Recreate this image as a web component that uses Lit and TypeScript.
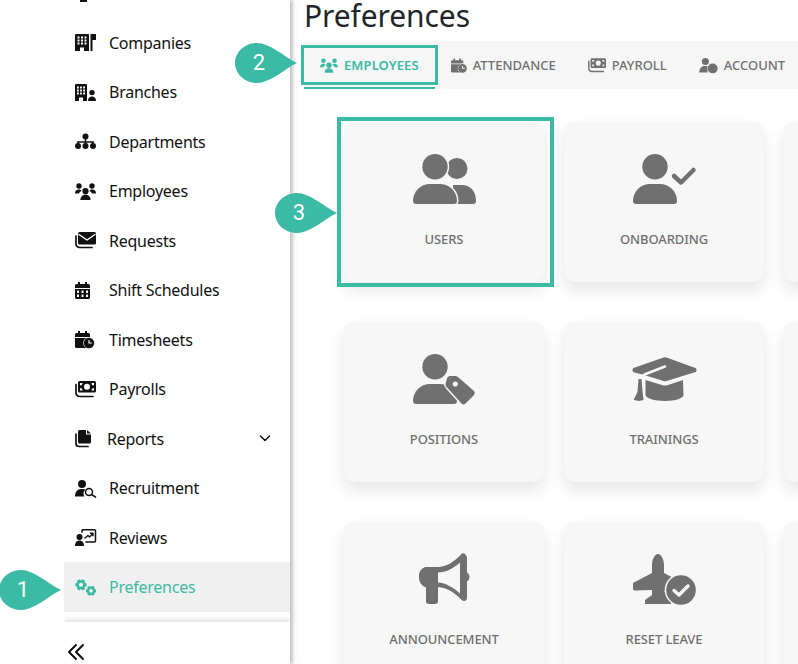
import { LitElement, html, css, svg } from 'lit';
import { customElement } from 'lit/decorators.js';

// polygon gear with a round hole, used with fill-rule evenodd
function gear(cx: number, cy: number, r: number, teeth = 6): string {
  const inner = r * 0.74;
  const pts: string[] = [];
  for (let i = 0; i < teeth; i++) {
    const a = (i / teeth) * Math.PI * 2;
    const w = Math.PI / teeth;
    [[inner, -w * 0.95], [r, -w * 0.5], [r, w * 0.5], [inner, w * 0.95]].forEach(([rad, off]) => {
      pts.push(`${(cx + rad * Math.cos(a + off)).toFixed(2)} ${(cy + rad * Math.sin(a + off)).toFixed(2)}`);
    });
  }
  const h = r * 0.36;
  return `M${pts.join('L')}zM${cx - h} ${cy}a${h} ${h} 0 1 0 ${h * 2} 0a${h} ${h} 0 1 0 ${-h * 2} 0z`;
}

function holes(xs: number[], ys: number[], w: number, h: number): string {
  return xs.map(x => ys.map(y => `M${x} ${y}h${w}v${h}h${-w}z`).join('')).join('');
}

const ICONS = {
  stub: svg`<path d="M5 14h7v3H5z"/>`,
  companies: svg`<path fill-rule="evenodd" d="M1 0h12a1 1 0 0 1 1 1v16H9v-3.5H5V17H0V1a1 1 0 0 1 1-1z${holes([2.5, 6, 9.5], [2.5, 5.5, 8.5], 2, 2)}"/><path d="M15.5 0H21v6h-3.5v11h-2z"/>`,
  branches: svg`<path fill-rule="evenodd" d="M1 0h10a1 1 0 0 1 1 1v16H8v-3.5H4V17H0V1a1 1 0 0 1 1-1z${holes([2, 5.1, 8.2], [2.5, 5.5, 8.5], 1.8, 2)}"/><circle cx="17" cy="8.6" r="2.7"/><path d="M13 17c0-3 1.5-4.6 4-4.6s4 1.6 4 4.6z"/>`,
  departments: svg`<circle cx="10.5" cy="3.5" r="3"/><path d="M9.7 5h1.6v3.2H18.8V12h-1.6V9.8h-5.9V12H9.7V9.8H3.8V12H2.2V8.2h7.5z"/><circle cx="3" cy="13" r="3"/><circle cx="10.5" cy="13" r="3"/><circle cx="18" cy="13" r="3"/>`,
  employees: svg`<circle cx="10.5" cy="8.2" r="3.1"/><path d="M5.4 17c0-3.2 2-5.3 5.1-5.3s5.1 2.1 5.1 5.3z"/><circle cx="4" cy="3" r="2.7"/><circle cx="17" cy="3" r="2.7"/><path d="M0 10.5c0-2.4 1.5-3.9 3.8-3.9 1.2 0 2.2.4 2.8 1.1-1.4 1-2.4 1.9-2.6 2.8z"/><path d="M21 10.5c0-2.4-1.5-3.9-3.8-3.9-1.2 0-2.2.4-2.8 1.1 1.4 1 2.4 1.9 2.6 2.8z"/>`,
  requests: svg`<path d="M4.5 0h15A1.5 1.5 0 0 1 21 1.5V11a1.5 1.5 0 0 1-1.5 1.5h-15A1.5 1.5 0 0 1 3 11V1.5A1.5 1.5 0 0 1 4.5 0z"/><path class="cut" stroke-width="1.5" d="M4 2.5l8 5.5 8-5.5"/><path class="line" stroke-width="1.7" d="M1 4v8a3.5 3.5 0 0 0 3.5 3.5H17"/>`,
  schedules: svg`<path d="M3 0h2v3H3zM10 0h2v3h-2z"/><path d="M1.5 2h12A1.5 1.5 0 0 1 15 3.5V6H0V3.5A1.5 1.5 0 0 1 1.5 2z"/><path fill-rule="evenodd" d="M0 7h15v8.5a1.5 1.5 0 0 1-1.5 1.5h-12A1.5 1.5 0 0 1 0 15.5z${holes([2, 6.5, 11], [8.5, 12.5], 2, 2.5)}"/>`,
  timesheets: svg`<path d="M3 0h2v3H3zM10 0h2v3h-2z"/><path d="M1.5 2h12A1.5 1.5 0 0 1 15 3.5V6H0V3.5A1.5 1.5 0 0 1 1.5 2z"/><path d="M0 7h15v10H1.5A1.5 1.5 0 0 1 0 15.5z"/><circle class="halo" cx="14" cy="12" r="5.2"/><path class="cut" stroke-width="1.2" d="M14 9.5V12h2.4"/>`,
  payrolls: svg`<path fill-rule="evenodd" d="M4.5 0h15A1.5 1.5 0 0 1 21 1.5V10a1.5 1.5 0 0 1-1.5 1.5h-15A1.5 1.5 0 0 1 3 10V1.5A1.5 1.5 0 0 1 4.5 0zM9 5.7a3 3 0 1 0 6 0a3 3 0 1 0-6 0zM5 2v2.5A2.5 2.5 0 0 0 7.5 2zM5 9.5h2.5A2.5 2.5 0 0 0 5 7zM19 2h-2.500A2.500 2.500 0 0 0 19 4.500zM19 9.500V7A2.500 2.500 0 0 0 16.500 9.500z"/><path class="line" stroke-width="1.7" d="M1 3.500v8.500a3.500 3.500 0 0 0 3.500 3.500H18"/>`,
  reports: svg`<path d="M4.500 0H11v4.500h5V12a1.500 1.500 0 0 1-1.500 1.500h-10A1.500 1.500 0 0 1 3 12V1.500A1.500 1.500 0 0 1 4.500 0zM12 0l4 3.500h-4z"/><path class="line" stroke-width="1.7" d="M1 4v9.500A3 3 0 0 0 4 16.500h9"/>`,
  recruitment: svg`<circle cx="7" cy="4" r="4"/><path d="M0 16.500C0 12 2.500 9 6 9h2c1 0 2 .2 2.500.6-1.500 1.200-2 2.500-2 4 0 1.200.5 2.300 1 2.900z"/><circle class="line" stroke-width="1.500" cx="14" cy="12" r="3.500"/><path class="line" stroke-width="1.500" d="M16.600 14.600L20.500 17"/>`,
  reviews: svg`<path class="line" stroke-width="1.500" d="M7 3V1.500A1 1 0 0 1 8 .8h11.500a1 1 0 0 1 1 1V12a1 1 0 0 1-1 1H11"/><path class="line" stroke-width="1.400" d="M10 9l3-2.500 1.500 1.500L18 4.500M15.500 4.300H18v2.500"/><circle cx="4.500" cy="8" r="3"/><path d="M0 17c0-3.300 1.700-5.500 4.500-5.500S9 13.700 9 17z"/>`,
  preferences: svg`<path fill-rule="evenodd" d="${gear(6, 5.8, 5.8)}"/><path fill-rule="evenodd" d="${gear(16, 11.8, 5.2)}"/>`,
  account: svg`<circle cx="7" cy="4" r="4"/><path d="M0 16.500C0 12 2.500 9 6 9h2c2 0 3 .7 3.500 1.500L9 16.500z"/><circle class="halo" cx="15.200" cy="11.800" r="5.600"/><path fill-rule="evenodd" d="${gear(15.2, 11.800, 5.200)}"/>`,
};

const person = svg`<circle cx="22" cy="12.700" r="12.700"/><path d="M0 47C0 37 8 30 17 30h10c9 0 17 7 17 17a3 3 0 0 1-3 3H3a3 3 0 0 1-3-3z"/>`;

const CARD_ICONS = {
  users: svg`<circle cx="44" cy="14.500" r="10.500"/><path d="M40 31h9c8 0 14 6 14 16a3 3 0 0 1-3 3H40z"/><circle class="halo2" cx="22" cy="12.700" r="12.700"/><path class="halo2" d="M0 47C0 37 8 30 17 30h10c9 0 17 7 17 17a3 3 0 0 1-3 3H3a3 3 0 0 1-3-3z"/>`,
  onboarding: svg`${person}<path class="line" stroke-width="4.500" d="M41 22l7 6.500L60.500 16"/>`,
  positions: svg`${person}<path class="halo2" d="M34 24.500a3 3 0 0 1 3-2.500h5c1.500 0 2.500.5 3.500 1.500L61 37a3 3 0 0 1 0 4l-8.500 8.500a3 3 0 0 1-4 0L34 33.500c-1-1-1.500-2-1.500-3.500z"/><circle class="dot" cx="42.300" cy="30" r="2.600"/>`,
  trainings: svg`<g transform="translate(0 3)"><path d="M30.500.5a5 5 0 0 1 3 0L61 10.500a2.500 2.500 0 0 1 0 5L33.500 24a5 5 0 0 1-3 0L12 18.300 2 15.500a2.500 2.500 0 0 1 0-5z"/><path d="M12.500 23l16.500 5a9 9 0 0 0 6 0l15-5 .5 15c0 3-8 6-18.500 6s-19.500-3-19.500-6z"/><path class="cut" stroke-width="2.500" d="M32 9.500L11.500 17.500C8.500 19 7 21 7 24"/><path d="M5.500 22h3l1 12 1 9-4.500 1-5-1c-.5-1 0-1.500.5-2l3-6z"/></g>`,
  announcement: svg`<g transform="translate(6 0)"><path fill-rule="evenodd" d="M6 13h13c8 0 16-5 22.500-12a2.800 2.800 0 0 1 5-.3c.8.900 1.500 1.800 1.500 3.300v14.500c1.500 1 2.500 2.500 2.500 4.500s-1 3.500-2.500 4.500V44a3 3 0 0 1-5 2.200C36 39 28 33.500 19 33v14a3 3 0 0 1-3 3H10a3 3 0 0 1-3-3V33.500A10 10 0 0 1 0 23a10 10 0 0 1 6-10zM19 18.500v10c7.500.5 15.500 5 22 11v-31c-6.500 6-14.500 10-22 10z"/></g>`,
  resetLeave: svg`<path d="M25 0c3.500 0 6 6 6 11v8l19 10v7l-19 1 7 8v5H12v-4l7-5v-5L2 36.500c-1 0-2-.5-2-2V29l19-10v-8c0-5 2.500-11 6-11z"/><circle class="halo2" cx="48" cy="36" r="14.800"/><path class="cut" stroke-width="3.500" d="M41 36.500l5 4.500 9-9"/>`,
};

const MENU: Array<{ key: keyof typeof ICONS; label: string }> = [
  { key: 'companies', label: 'Companies' },
  { key: 'branches', label: 'Branches' },
  { key: 'departments', label: 'Departments' },
  { key: 'employees', label: 'Employees' },
  { key: 'requests', label: 'Requests' },
  { key: 'schedules', label: 'Shift Schedules' },
  { key: 'timesheets', label: 'Timesheets' },
  { key: 'payrolls', label: 'Payrolls' },
  { key: 'reports', label: 'Reports' },
  { key: 'recruitment', label: 'Recruitment' },
  { key: 'reviews', label: 'Reviews' },
  { key: 'preferences', label: 'Preferences' },
];

const TABS: Array<{ key: keyof typeof ICONS; label: string; w: number; vb: number }> = [
  { key: 'employees', label: 'Employees', w: 18, vb: 21 },
  { key: 'timesheets', label: 'Attendance', w: 16, vb: 19.5 },
  { key: 'payrolls', label: 'Payroll', w: 18, vb: 21 },
  { key: 'account', label: 'Account', w: 19, vb: 21 },
];

const CARDS: Array<{ key: keyof typeof CARD_ICONS | null; label: string }> = [
  { key: 'users', label: 'Users' },
  { key: 'onboarding', label: 'Onboarding' },
  { key: null, label: '' },
  { key: 'positions', label: 'Positions' },
  { key: 'trainings', label: 'Trainings' },
  { key: null, label: '' },
  { key: 'announcement', label: 'Announcement' },
  { key: 'resetLeave', label: 'Reset Leave' },
  { key: null, label: '' },
];

@customElement('app-root')
export class AppRoot extends LitElement {
  static styles = css`
    :host {
      display: flex;
      position: relative;
      width: 798px;
      height: 664px;
      overflow: hidden;
      background: #fff;
      font-family: 'Noto Sans', sans-serif;
      --teal: #3bbba5;
      --bg: #fff;
    }
    svg {
      fill: currentColor;
      overflow: visible;
      flex: none;
    }
    .line { fill: none; stroke: currentColor; stroke-linecap: round; stroke-linejoin: round; }
    .cut { fill: none; stroke: var(--bg); stroke-linecap: round; stroke-linejoin: round; }
    .halo { stroke: var(--bg); stroke-width: 1.2; paint-order: stroke; }
    .halo2 { stroke: var(--bg); stroke-width: 3; paint-order: stroke; }
    .dot { fill: var(--bg); }

    .sidebar {
      flex: none;
      width: 290px;
      height: 664px;
      display: flex;
      flex-direction: column;
      box-shadow: 2px 0 5px rgba(0, 0, 0, 0.32);
      z-index: 1;
      background: #fff;
    }
    .menu {
      flex: 1;
      min-height: 0;
      overflow: hidden;
      display: flex;
      flex-direction: column;
      justify-content: flex-end;
      margin-left: 64px;
    }
    .item {
      flex: none;
      height: 49.5px;
      display: flex;
      align-items: center;
      gap: 13px;
      padding-left: 11px;
      font-size: 16px;
      letter-spacing: -0.25px;
      color: #111;
    }
    .item.reports { gap: 15px; }
    .item.active {
      background: #f0f0f0;
      color: var(--teal);
      --bg: #f0f0f0;
    }
    .caret { margin-left: auto; margin-right: 19px; }
    .collapse {
      flex: none;
      height: 42px;
      margin: 10.25px 0 0 64px;
      box-shadow: 0 -3px 4px rgba(0, 0, 0, 0.1);
      clip-path: inset(-8px 0 0 0);
      display: flex;
      align-items: center;
      padding: 17px 0 0 4px;
      box-sizing: border-box;
      background: #fff;
      color: #111;
    }

    .main {
      flex: 1;
      min-width: 0;
      padding-left: 14px;
    }
    h1 {
      margin: 0;
      height: 41px;
      font-size: 30px;
      line-height: 32px;
      font-weight: 400;
      letter-spacing: -0.1px;
      color: #212529;
    }
    .tabs {
      display: flex;
      height: 48px;
      width: 520px;
      background: #f6f6f6;
      --bg: #f6f6f6;
    }
    .tab {
      position: relative;
      display: flex;
      align-items: center;
      gap: 6px;
      padding: 0 16px;
      font-size: 13px;
      font-weight: 500;
      text-transform: uppercase;
      color: #707070;
      white-space: nowrap;
    }
    .tab.active {
      color: var(--teal);
      font-weight: 600;
      letter-spacing: 0.1px;
      border-bottom: 2px solid var(--teal);
      padding-top: 2px;
    }
    .tab.active::after {
      content: '';
      position: absolute;
      left: -3px;
      right: -3px;
      top: 4px;
      bottom: 2px;
      border: 3px solid var(--teal);
    }
    .grid {
      display: grid;
      grid-template-columns: repeat(3, 200px);
      gap: 40px 20px;
      margin: 33px 0 0 40px;
    }
    .card {
      position: relative;
      height: 160px;
      box-sizing: border-box;
      padding-top: 32px;
      display: flex;
      flex-direction: column;
      align-items: center;
      background: #f7f7f7;
      border-radius: 10px;
      box-shadow: 0 8px 16px rgba(0, 0, 0, 0.1);
      color: #707070;
      --bg: #f7f7f7;
    }
    .card .glyph {
      height: 50px;
      display: flex;
      align-items: center;
    }
    .card .label {
      margin-top: 25px;
      font-size: 13px;
      line-height: 20px;
      font-weight: 500;
      letter-spacing: -0.1px;
      text-transform: uppercase;
    }
    .card.marked::after {
      content: '';
      position: absolute;
      left: -7px;
      right: -10px;
      top: -5px;
      bottom: -5px;
      border: 4px solid var(--teal);
    }

    .bubble {
      position: absolute;
      z-index: 2;
      width: 62px;
      height: 40px;
      color: var(--teal);
    }
    .bubble span {
      position: absolute;
      left: 0;
      top: 0;
      width: 48px;
      height: 40px;
      line-height: 40px;
      text-align: center;
      color: #fff;
      font-family: Roboto, sans-serif;
      font-size: 22px;
    }
    .b1 { left: -1px; top: 570px; }
    .b2 { left: 235px; top: 43px; }
    .b3 { left: 275px; top: 193px; }
  `;

  private icon(key: keyof typeof ICONS, w = 21, h = 17, vb = 21) {
    return html`<svg width=${w} height=${h} viewBox="0 0 ${vb} 17">${ICONS[key]}</svg>`;
  }

  private bubble(n: number) {
    return html`<div class="bubble b${n}">
      <svg width="62" height="40" viewBox="0 0 62 40"><path d="M22 0C35 0 48 13 62 20C48 27 35 40 22 40C10 40 0 31 0 20C0 9 10 0 22 0z"/></svg>
      <span>${n}</span>
    </div>`;
  }

  render() {
    return html`
      <aside class="sidebar">
        <nav class="menu">
          <div class="item">${this.icon('stub')}</div>
          ${MENU.map(m => html`
            <div class="item ${m.key === 'reports' ? 'reports' : ''} ${m.key === 'preferences' ? 'active' : ''}">
              ${m.key === 'reports' ? this.icon(m.key, 17, 17, 17) : this.icon(m.key)}
              <span>${m.label}</span>
              ${m.key === 'reports' ? html`<svg class="caret" width="12" height="7" viewBox="0 0 12 7"><path class="line" stroke-width="1.5" d="M1.500 1L6 5.500 10.500 1"/></svg>` : ''}
            </div>
          `)}
        </nav>
        <div class="collapse">
          <svg width="16" height="16" viewBox="0 0 16 16"><path class="line" stroke-width="2" d="M8 1L1 8l7 7M15 1L8 8l7 7"/></svg>
        </div>
      </aside>
      <main class="main">
        <h1>Preferences</h1>
        <div class="tabs">
          ${TABS.map((t, i) => html`
            <div class="tab ${i === 0 ? 'active' : ''}">
              ${this.icon(t.key, t.w, 15, t.vb)}
              <span>${t.label}</span>
            </div>
          `)}
        </div>
        <div class="grid">
          ${CARDS.map((c, i) => html`
            <div class="card ${i === 0 ? 'marked' : ''}">
              ${c.key ? html`
                <div class="glyph"><svg width="63" height="50" viewBox="0 0 63 50">${CARD_ICONS[c.key]}</svg></div>
                <div class="label">${c.label}</div>
              ` : ''}
            </div>
          `)}
        </div>
      </main>
      ${[1, 2, 3].map(n => this.bubble(n))}
    `;
  }
}
